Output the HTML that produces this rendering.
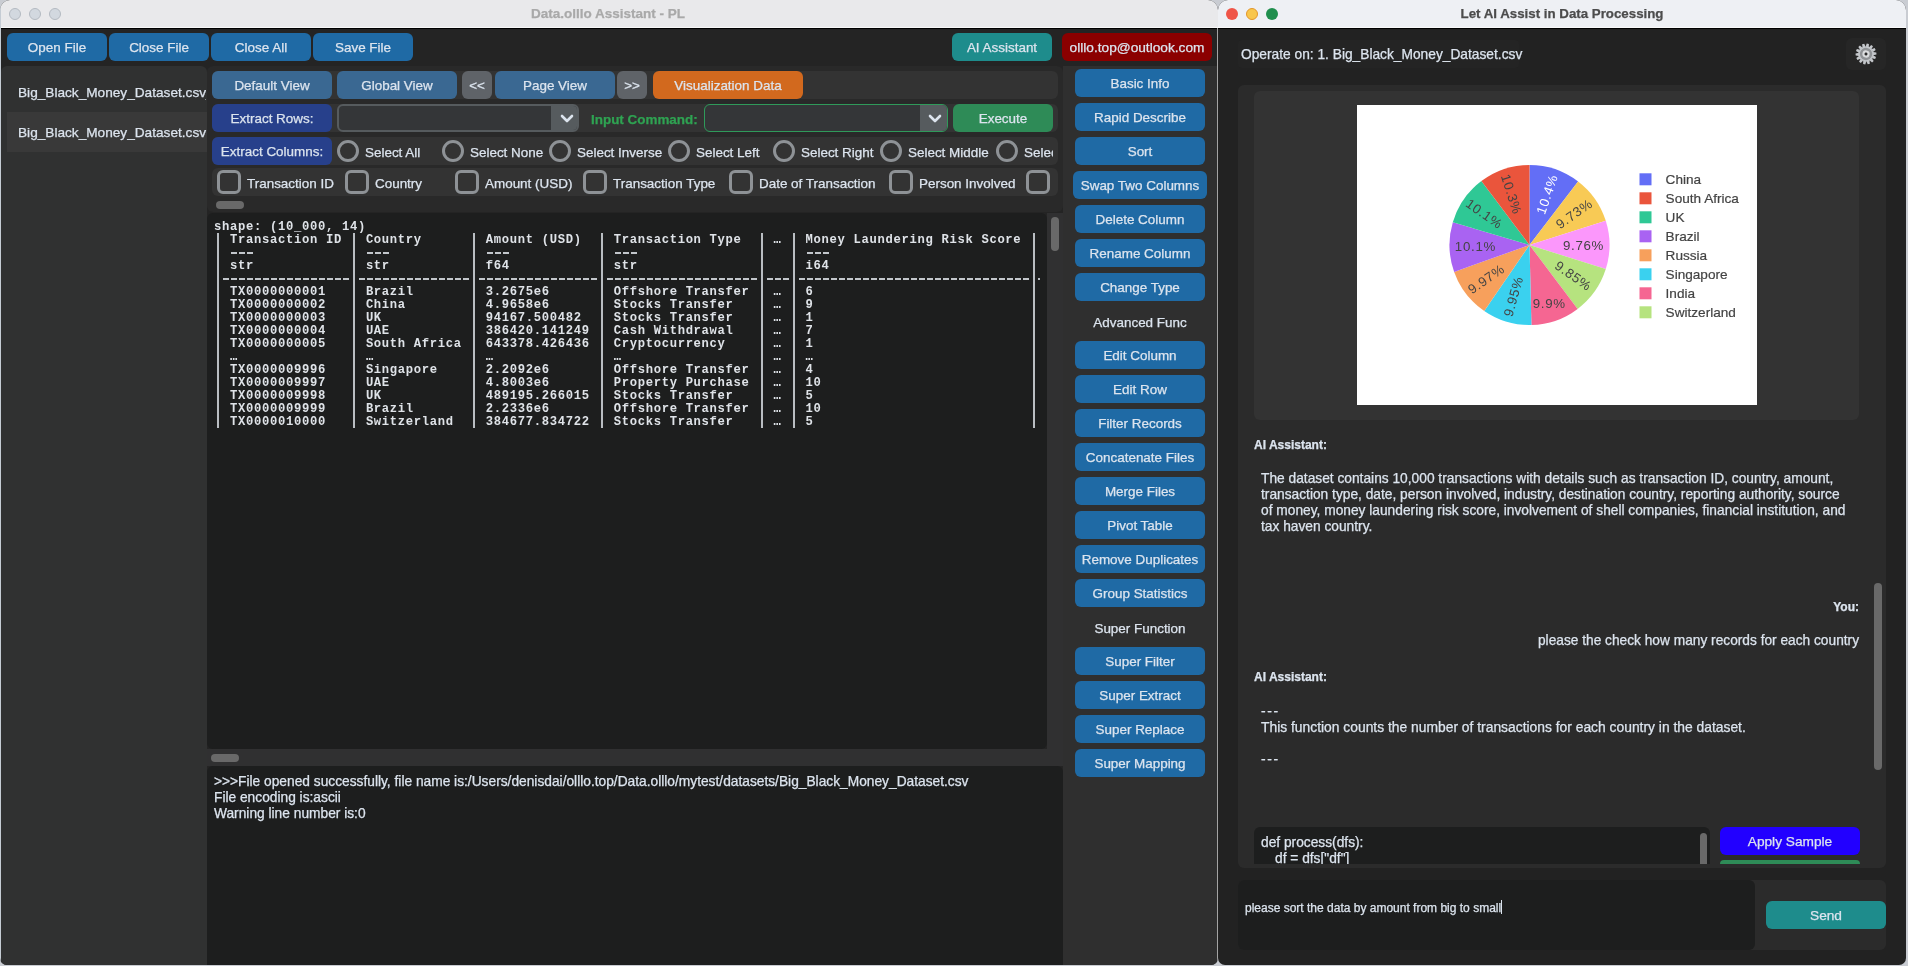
<!DOCTYPE html>
<html><head><meta charset="utf-8">
<style>
*{margin:0;padding:0;box-sizing:border-box}
html,body{width:1908px;height:966px;overflow:hidden;background:#c9ccd2;-webkit-font-smoothing:antialiased;font-family:"Liberation Sans",sans-serif;}
.a{position:absolute}
#lw,#rw{will-change:transform}
.btn{position:absolute;background:#1f6aa5;color:#dce4ee;-webkit-text-stroke:0.25px #dce4ee;border-radius:6px;font-size:13.45px;text-align:center;line-height:29px;height:28px;white-space:nowrap;overflow:hidden}
.t{position:absolute;color:#dce4ee;font-size:13.45px;-webkit-text-stroke:0.25px currentColor;white-space:nowrap;line-height:16px}
.band{position:absolute;background:#333333;border-radius:6px}
.radio{position:absolute;width:22px;height:22px;border:3px solid #8e9296;border-radius:50%}
.cb{position:absolute;width:24px;height:24px;border:3px solid #8e9296;border-radius:6px}
.mono{font-family:"Liberation Mono",monospace;font-size:12.2px;letter-spacing:0.68px;line-height:13px;color:#dfe3e8;white-space:pre;font-weight:bold}
.dash{height:2px;background:repeating-linear-gradient(90deg,transparent 0 1px,#c2c6cb 1px 7px,transparent 7px 8px)}
.combo{position:absolute;height:28px;background:#343638;border:2px solid #565b5e;border-radius:6px;overflow:hidden}
.combo .arr{position:absolute;right:-2px;top:-2px;width:28px;height:28px;background:#565b5e;border-radius:0 6px 6px 0}
</style></head><body>

<!-- ================= LEFT WINDOW ================= -->
<div class="a" id="lw" style="left:0;top:0;width:1218px;height:965px;background:#242424;border-radius:10px 10px 7px 7px;overflow:hidden">
  <!-- title bar -->
  <div class="a" style="left:0;top:0;width:1218px;height:29px;background:#e9e9eb;border-bottom:1px solid #000"></div><div class="a" style="left:0;top:27px;width:1218px;height:1px;background:#f8f8f8"></div><div class="a" style="left:0;top:0;width:1px;height:966px;background:#c5ccd4"></div>
  <div class="a" style="left:9px;top:8px;width:12px;height:12px;border-radius:50%;background:#d2d8df;border:1px solid #b3b9c1"></div>
  <div class="a" style="left:29px;top:8px;width:12px;height:12px;border-radius:50%;background:#d2d8df;border:1px solid #b3b9c1"></div>
  <div class="a" style="left:49px;top:8px;width:12px;height:12px;border-radius:50%;background:#d2d8df;border:1px solid #b3b9c1"></div>
  <div class="t" style="left:0;width:1216px;top:6px;text-align:center;color:#a9a9a9;font-weight:bold;font-size:13.5px">Data.olllo Assistant - PL</div>

  <!-- top buttons -->
  <div class="btn" style="left:7px;top:33px;width:100px">Open File</div>
  <div class="btn" style="left:109px;top:33px;width:100px">Close File</div>
  <div class="btn" style="left:211px;top:33px;width:100px">Close All</div>
  <div class="btn" style="left:313px;top:33px;width:100px">Save File</div>
  <div class="btn" style="left:952px;top:33px;width:100px;background:#1e8c8c">AI Assistant</div>
  <div class="btn" style="left:1062px;top:33px;width:150px;background:#8b0000;font-size:13.7px">olllo.top@outlook.com</div>

  <!-- file list panel -->
  <div class="a" style="left:1px;top:66px;width:206px;height:900px;background:#303131;border-radius:6px 6px 0 0"></div>
  <div class="a" style="left:7px;top:112px;width:200px;height:40px;background:#393939"></div>
  <div class="t" style="left:18px;top:85px;width:188px;overflow:hidden;font-size:13.65px">Big_Black_Money_Dataset.csv_</div>
  <div class="t" style="left:18px;top:125px;width:190px;overflow:hidden;font-size:13.65px">Big_Black_Money_Dataset.csv</div>

  <!-- middle top frame -->
  <div class="a" id="midtop" style="left:207px;top:66px;width:856px;height:146px;background:#292929;border-radius:6px"></div>


  <!-- middle top rows -->
  <div class="band" style="left:212px;top:71px;width:846px;height:28px"></div>
  <div class="band" style="left:212px;top:104px;width:846px;height:28px"></div>
  <div class="band" style="left:212px;top:137px;width:846px;height:28px"></div>
  <div class="band" style="left:212px;top:168px;width:846px;height:28px"></div>
  <div class="btn" style="left:212px;top:71px;width:120px;background:#3a6892">Default View</div>
  <div class="btn" style="left:337px;top:71px;width:120px;background:#3a6892">Global View</div>
  <div class="btn" style="left:462px;top:71px;width:30px;background:#5f6368">&lt;&lt;</div>
  <div class="btn" style="left:495px;top:71px;width:120px;background:#3a6892">Page View</div>
  <div class="btn" style="left:617px;top:71px;width:30px;background:#5f6368">&gt;&gt;</div>
  <div class="btn" style="left:653px;top:71px;width:150px;background:#d2691e">Visualization Data</div>

  <div class="btn" style="left:212px;top:104px;width:120px;background:#27408b">Extract Rows:</div>
  <div class="combo" style="left:337px;top:104px;width:242px"><div class="arr"></div></div>
  <svg class="a" style="left:560px;top:114px" width="14" height="10" viewBox="0 0 14 10"><path d="M2 2 L7 7 L12 2" stroke="#dce4ee" stroke-width="2.6" fill="none" stroke-linecap="round" stroke-linejoin="round"/></svg>
  <div class="t" style="left:591px;top:112px;color:#2fa352;font-weight:bold">Input Command:</div>
  <div class="combo" style="left:704px;top:104px;width:244px;border:1px solid #2f9a5a"><div class="arr" style="right:-1px;top:-1px"></div></div>
  <svg class="a" style="left:928px;top:114px" width="14" height="10" viewBox="0 0 14 10"><path d="M2 2 L7 7 L12 2" stroke="#dce4ee" stroke-width="2.6" fill="none" stroke-linecap="round" stroke-linejoin="round"/></svg>
  <div class="btn" style="left:953px;top:104px;width:100px;background:#2e8b57">Execute</div>

  <div class="btn" style="left:212px;top:137px;width:120px;background:#27408b">Extract Columns:</div>
  <div class="radio" style="left:337px;top:140px"></div>
  <div class="radio" style="left:442px;top:140px"></div>
  <div class="radio" style="left:549px;top:140px"></div>
  <div class="radio" style="left:668px;top:140px"></div>
  <div class="radio" style="left:773px;top:140px"></div>
  <div class="radio" style="left:880px;top:140px"></div>
  <div class="radio" style="left:996px;top:140px"></div>
  <div class="a" style="left:1024px;top:137px;width:29px;height:28px;overflow:hidden"><div class="t" style="left:0;top:8px">Select Last</div></div>
  <div class="t" style="left:365px;top:145px">Select All</div>
  <div class="t" style="left:470px;top:145px">Select None</div>
  <div class="t" style="left:577px;top:145px">Select Inverse</div>
  <div class="t" style="left:696px;top:145px">Select Left</div>
  <div class="t" style="left:801px;top:145px">Select Right</div>
  <div class="t" style="left:908px;top:145px">Select Middle</div>
  <div class="cb" style="left:217px;top:170px"></div>
  <div class="t" style="left:247px;top:176px">Transaction ID</div>
  <div class="cb" style="left:345px;top:170px"></div>
  <div class="t" style="left:375px;top:176px">Country</div>
  <div class="cb" style="left:455px;top:170px"></div>
  <div class="t" style="left:485px;top:176px">Amount (USD)</div>
  <div class="cb" style="left:583px;top:170px"></div>
  <div class="t" style="left:613px;top:176px">Transaction Type</div>
  <div class="cb" style="left:729px;top:170px"></div>
  <div class="t" style="left:759px;top:176px">Date of Transaction</div>
  <div class="cb" style="left:889px;top:170px"></div>
  <div class="t" style="left:919px;top:176px">Person Involved</div>
  <div class="cb" style="left:1026px;top:170px"></div>
  <div class="a" style="left:216px;top:201px;width:28px;height:8px;border-radius:4px;background:#696969"></div>

  <!-- right button panel -->
  <div class="a" id="rpanel" style="left:1063px;top:66px;width:154px;height:900px;background:#2f2f2f"></div>
  <div class="a" style="left:1217px;top:28px;width:1px;height:940px;background:#a3a3a3"></div>

  <div class="btn" style="left:1075px;top:69px;width:130px">Basic Info</div>
  <div class="btn" style="left:1075px;top:103px;width:130px">Rapid Describe</div>
  <div class="btn" style="left:1075px;top:137px;width:130px">Sort</div>
  <div class="btn" style="left:1073px;top:171px;width:134px">Swap Two Columns</div>
  <div class="btn" style="left:1075px;top:205px;width:130px">Delete Column</div>
  <div class="btn" style="left:1075px;top:239px;width:130px">Rename Column</div>
  <div class="btn" style="left:1075px;top:273px;width:130px">Change Type</div>
  <div class="btn" style="left:1075px;top:341px;width:130px">Edit Column</div>
  <div class="btn" style="left:1075px;top:375px;width:130px">Edit Row</div>
  <div class="btn" style="left:1075px;top:409px;width:130px">Filter Records</div>
  <div class="btn" style="left:1075px;top:443px;width:130px">Concatenate Files</div>
  <div class="btn" style="left:1075px;top:477px;width:130px">Merge Files</div>
  <div class="btn" style="left:1075px;top:511px;width:130px">Pivot Table</div>
  <div class="btn" style="left:1075px;top:545px;width:130px">Remove Duplicates</div>
  <div class="btn" style="left:1075px;top:579px;width:130px">Group Statistics</div>
  <div class="btn" style="left:1075px;top:647px;width:130px">Super Filter</div>
  <div class="btn" style="left:1075px;top:681px;width:130px">Super Extract</div>
  <div class="btn" style="left:1075px;top:715px;width:130px">Super Replace</div>
  <div class="btn" style="left:1075px;top:749px;width:130px">Super Mapping</div>
  <div class="t" style="left:1063px;width:154px;text-align:center;top:315px">Advanced Func</div>
  <div class="t" style="left:1063px;width:154px;text-align:center;top:621px">Super Function</div>

  <!-- table -->
  <div class="a" id="table" style="left:207px;top:213px;width:840px;height:536px;background:#1d1e1e;border-radius:6px"></div>
  <div class="a" style="left:1047px;top:213px;width:16px;height:553px;background:#303031"></div>
  <div class="a" style="left:207px;top:749px;width:856px;height:17px;background:#303031"></div>

  <!-- table content -->
  <pre class="a mono" style="left:214px;top:221px">shape: (10_000, 14)
  Transaction ID   Country        Amount (USD)    Transaction Type    …   Money Laundering Risk Score

  str              str            f64             str                     i64

  TX0000000001     Brazil         3.2675e6        Offshore Transfer   …   6
  TX0000000002     China          4.9658e6        Stocks Transfer     …   9
  TX0000000003     UK             94167.500482    Stocks Transfer     …   1
  TX0000000004     UAE            386420.141249   Cash Withdrawal     …   7
  TX0000000005     South Africa   643378.426436   Cryptocurrency      …   1
  …                …              …               …                   …   …
  TX0000009996     Singapore      2.2092e6        Offshore Transfer   …   4
  TX0000009997     UAE            4.8003e6        Property Purchase   …   10
  TX0000009998     UK             489195.266015   Stocks Transfer     …   5
  TX0000009999     Brazil         2.2336e6        Offshore Transfer   …   10
  TX0000010000     Switzerland    384677.834722   Stocks Transfer     …   5</pre>
  <div class="a" style="left:217px;top:233px;width:2px;height:195px;background:#b9bdc2"></div>
  <div class="a" style="left:353px;top:233px;width:2px;height:195px;background:#b9bdc2"></div>
  <div class="a" style="left:473px;top:233px;width:2px;height:195px;background:#b9bdc2"></div>
  <div class="a" style="left:601px;top:233px;width:2px;height:195px;background:#b9bdc2"></div>
  <div class="a" style="left:761px;top:233px;width:2px;height:195px;background:#b9bdc2"></div>
  <div class="a" style="left:793px;top:233px;width:2px;height:195px;background:#b9bdc2"></div>
  <div class="a" style="left:1033px;top:233px;width:2px;height:195px;background:#b9bdc2"></div>
  <div class="a dash" style="left:222px;top:278px;width:128px"></div>
  <div class="a dash" style="left:358px;top:278px;width:112px"></div>
  <div class="a dash" style="left:478px;top:278px;width:120px"></div>
  <div class="a dash" style="left:606px;top:278px;width:152px"></div>
  <div class="a dash" style="left:766px;top:278px;width:24px"></div>
  <div class="a dash" style="left:798px;top:278px;width:232px"></div>
  <div class="a dash" style="left:230px;top:252px;width:24px"></div>
  <div class="a dash" style="left:366px;top:252px;width:24px"></div>
  <div class="a dash" style="left:486px;top:252px;width:24px"></div>
  <div class="a dash" style="left:614px;top:252px;width:24px"></div>
  <div class="a dash" style="left:806px;top:252px;width:24px"></div>
  <div class="a" style="left:1038px;top:278px;width:2px;height:2px;background:#b9bdc2"></div>
  <!-- log -->
  <div class="a" id="log" style="left:207px;top:766px;width:856px;height:200px;background:#1d1e1e;border-radius:6px 6px 0 0"></div>
  <div class="t" style="left:214px;top:774px;line-height:16px;font-size:13.75px">&gt;&gt;&gt;File opened successfully, file name is:/Users/denisdai/olllo.top/Data.olllo/mytest/datasets/Big_Black_Money_Dataset.csv<br>File encoding is:ascii<br>Warning line number is:0</div>
  <div class="a" style="left:1051px;top:217px;width:8px;height:34px;border-radius:4px;background:#696969"></div>
  <div class="a" style="left:211px;top:754px;width:28px;height:8px;border-radius:4px;background:#696969"></div>
</div>

<!-- ================= RIGHT WINDOW ================= -->
<div class="a" id="rw" style="left:1218px;top:0;width:688px;height:965px;background:#222222;border-radius:10px 10px 7px 7px;overflow:hidden">
  <div class="a" style="left:0;top:0;width:688px;height:29px;background:#eef0f4;border-bottom:1px solid #000"></div><div class="a" style="left:0;top:27px;width:688px;height:1px;background:#fafafa"></div>
  <div class="a" style="left:8px;top:8px;width:12px;height:12px;border-radius:50%;background:#ef5548"></div>
  <div class="a" style="left:28px;top:8px;width:12px;height:12px;border-radius:50%;background:#f8c64c;border:1px solid #e3962a"></div>
  <div class="a" style="left:48px;top:8px;width:12px;height:12px;border-radius:50%;background:#1f8e4d"></div>
  <div class="t" style="left:0;width:688px;top:6px;text-align:center;color:#4c4c4c;font-weight:bold;font-size:13.3px">Let AI Assist in Data Processing</div>

  <!-- operate on -->
  <div class="a" style="left:20px;top:40px;width:281px;height:28px;background:#242424;border-radius:4px"></div>
  <div class="t" style="left:23px;top:47px;font-size:13.75px">Operate on: 1. Big_Black_Money_Dataset.csv</div>
  <div class="a" style="left:628px;top:38px;width:40px;height:32px;background:#262626;border-radius:6px"></div>
  <svg class="a" style="left:636.5px;top:43.3px" width="22" height="22" viewBox="-11 -11 22 22"><g transform="rotate(10)"><path d="M-1.6,-7 L-1.1,-10.4 L1.1,-10.4 L1.6,-7 Z" fill="#c4c7cb" transform="rotate(0.00)"/><path d="M-1.6,-7 L-1.1,-10.4 L1.1,-10.4 L1.6,-7 Z" fill="#c4c7cb" transform="rotate(25.71)"/><path d="M-1.6,-7 L-1.1,-10.4 L1.1,-10.4 L1.6,-7 Z" fill="#c4c7cb" transform="rotate(51.43)"/><path d="M-1.6,-7 L-1.1,-10.4 L1.1,-10.4 L1.6,-7 Z" fill="#c4c7cb" transform="rotate(77.14)"/><path d="M-1.6,-7 L-1.1,-10.4 L1.1,-10.4 L1.6,-7 Z" fill="#c4c7cb" transform="rotate(102.86)"/><path d="M-1.6,-7 L-1.1,-10.4 L1.1,-10.4 L1.6,-7 Z" fill="#c4c7cb" transform="rotate(128.57)"/><path d="M-1.6,-7 L-1.1,-10.4 L1.1,-10.4 L1.6,-7 Z" fill="#c4c7cb" transform="rotate(154.29)"/><path d="M-1.6,-7 L-1.1,-10.4 L1.1,-10.4 L1.6,-7 Z" fill="#c4c7cb" transform="rotate(180.00)"/><path d="M-1.6,-7 L-1.1,-10.4 L1.1,-10.4 L1.6,-7 Z" fill="#c4c7cb" transform="rotate(205.71)"/><path d="M-1.6,-7 L-1.1,-10.4 L1.1,-10.4 L1.6,-7 Z" fill="#c4c7cb" transform="rotate(231.43)"/><path d="M-1.6,-7 L-1.1,-10.4 L1.1,-10.4 L1.6,-7 Z" fill="#c4c7cb" transform="rotate(257.14)"/><path d="M-1.6,-7 L-1.1,-10.4 L1.1,-10.4 L1.6,-7 Z" fill="#c4c7cb" transform="rotate(282.86)"/><path d="M-1.6,-7 L-1.1,-10.4 L1.1,-10.4 L1.6,-7 Z" fill="#c4c7cb" transform="rotate(308.57)"/><path d="M-1.6,-7 L-1.1,-10.4 L1.1,-10.4 L1.6,-7 Z" fill="#c4c7cb" transform="rotate(334.29)"/><circle r="7.6" fill="#c4c7cb"/><circle r="6.2" fill="#909396"/><circle r="3.6" fill="#dadcde"/><circle r="1.5" fill="#2a2a2a"/></g></svg>
  <!-- chat frame -->
  <div class="a" style="left:20px;top:85px;width:648px;height:783px;background:#2b2b2b;border-radius:6px"></div>
  <div class="a" style="left:36px;top:91px;width:605px;height:329px;background:#333333;border-radius:6px"></div>
  <svg class="a" style="left:139px;top:105px" width="400" height="300" viewBox="0 0 400 300" font-family="Liberation Sans"><rect width="400" height="300" fill="#fff"/><path d="M172.5,140 L172.50,60.00 A80,80 0 0 1 221.09,76.45 Z" fill="#636ef6" /><path d="M172.5,140 L221.09,76.45 A80,80 0 0 1 248.75,115.81 Z" fill="#f8ca55" /><path d="M172.5,140 L248.75,115.81 A80,80 0 0 1 248.78,164.10 Z" fill="#fb97fb" /><path d="M172.5,140 L248.78,164.10 A80,80 0 0 1 220.65,203.88 Z" fill="#b6e37f" /><path d="M172.5,140 L220.65,203.88 A80,80 0 0 1 174.41,219.98 Z" fill="#f56692" /><path d="M172.5,140 L174.41,219.98 A80,80 0 0 1 127.24,205.97 Z" fill="#3ad1ef" /><path d="M172.5,140 L127.24,205.97 A80,80 0 0 1 97.16,166.91 Z" fill="#f7a05c" /><path d="M172.5,140 L97.16,166.91 A80,80 0 0 1 95.82,117.20 Z" fill="#a963f2" /><path d="M172.5,140 L95.82,117.20 A80,80 0 0 1 124.39,76.09 Z" fill="#2fc895" /><path d="M172.5,140 L124.39,76.09 A80,80 0 0 1 172.50,60.00 Z" fill="#ea553c" /><text x="190.2" y="89.3" transform="rotate(-71 190.2 89.3)" fill="#fff" font-size="13.3" letter-spacing="0.7" text-anchor="middle" dominant-baseline="central">10.4%</text><text x="217.3" y="108.9" transform="rotate(-35 217.3 108.9)" fill="#444" font-size="13.3" letter-spacing="0.7" text-anchor="middle" dominant-baseline="central">9.73%</text><text x="226.5" y="140.4" transform="rotate(0 226.5 140.4)" fill="#444" font-size="13.3" letter-spacing="0.7" text-anchor="middle" dominant-baseline="central">9.76%</text><text x="216.3" y="170.9" transform="rotate(35 216.3 170.9)" fill="#444" font-size="13.3" letter-spacing="0.7" text-anchor="middle" dominant-baseline="central">9.85%</text><text x="192.3" y="198.0" transform="rotate(0 192.3 198.0)" fill="#444" font-size="13.3" letter-spacing="0.7" text-anchor="middle" dominant-baseline="central">9.9%</text><text x="156.5" y="191.5" transform="rotate(-74 156.5 191.5)" fill="#444" font-size="13.3" letter-spacing="0.7" text-anchor="middle" dominant-baseline="central">9.95%</text><text x="129.3" y="174.1" transform="rotate(-35 129.3 174.1)" fill="#444" font-size="13.3" letter-spacing="0.7" text-anchor="middle" dominant-baseline="central">9.97%</text><text x="118.4" y="141.5" transform="rotate(0 118.4 141.5)" fill="#444" font-size="13.3" letter-spacing="0.7" text-anchor="middle" dominant-baseline="central">10.1%</text><text x="127.1" y="108.9" transform="rotate(35 127.1 108.9)" fill="#444" font-size="13.3" letter-spacing="0.7" text-anchor="middle" dominant-baseline="central">10.1%</text><text x="154.3" y="89.3" transform="rotate(72 154.3 89.3)" fill="#444" font-size="13.3" letter-spacing="0.7" text-anchor="middle" dominant-baseline="central">10.3%</text><rect x="282.5" y="68.3" width="12" height="12" fill="#636ef6"/><text x="308.6" y="74.3" fill="#444" font-size="13.6" stroke="#444" stroke-width="0.2" dominant-baseline="central">China</text><rect x="282.5" y="87.3" width="12" height="12" fill="#ea553c"/><text x="308.6" y="93.3" fill="#444" font-size="13.6" stroke="#444" stroke-width="0.2" dominant-baseline="central">South Africa</text><rect x="282.5" y="106.3" width="12" height="12" fill="#2fc895"/><text x="308.6" y="112.3" fill="#444" font-size="13.6" stroke="#444" stroke-width="0.2" dominant-baseline="central">UK</text><rect x="282.5" y="125.3" width="12" height="12" fill="#a963f2"/><text x="308.6" y="131.3" fill="#444" font-size="13.6" stroke="#444" stroke-width="0.2" dominant-baseline="central">Brazil</text><rect x="282.5" y="144.3" width="12" height="12" fill="#f7a05c"/><text x="308.6" y="150.3" fill="#444" font-size="13.6" stroke="#444" stroke-width="0.2" dominant-baseline="central">Russia</text><rect x="282.5" y="163.3" width="12" height="12" fill="#3ad1ef"/><text x="308.6" y="169.3" fill="#444" font-size="13.6" stroke="#444" stroke-width="0.2" dominant-baseline="central">Singapore</text><rect x="282.5" y="182.3" width="12" height="12" fill="#f56692"/><text x="308.6" y="188.3" fill="#444" font-size="13.6" stroke="#444" stroke-width="0.2" dominant-baseline="central">India</text><rect x="282.5" y="201.3" width="12" height="12" fill="#b6e37f"/><text x="308.6" y="207.3" fill="#444" font-size="13.6" stroke="#444" stroke-width="0.2" dominant-baseline="central">Switzerland</text></svg>
  <div class="t" style="left:36px;top:437px;font-size:12px;font-weight:bold">AI Assistant:</div>
  <div class="t" style="left:43px;top:471px;font-size:13.75px;line-height:16px">The dataset contains 10,000 transactions with details such as transaction ID, country, amount,<br>transaction type, date, person involved, industry, destination country, reporting authority, source<br>of money, money laundering risk score, involvement of shell companies, financial institution, and<br>tax haven country.</div>
  <div class="t" style="left:300px;width:341px;text-align:right;top:599px;font-size:12px;font-weight:bold">You:</div>
  <div class="t" style="left:200px;width:441px;text-align:right;top:633px;font-size:13.72px">please the check how many records for each country</div>
  <div class="t" style="left:36px;top:669px;font-size:12px;font-weight:bold">AI Assistant:</div>
  <div class="t" style="left:43px;top:703px;font-size:13.85px;line-height:16px"><span style="letter-spacing:1.6px">---</span><br>This function counts the number of transactions for each country in the dataset.<br><br><span style="letter-spacing:1.6px">---</span></div>
  <div class="a" style="left:656px;top:583px;width:8px;height:187px;border-radius:4px;background:#696969"></div>
  <!-- code box -->
  <div class="a" style="left:36px;top:827px;width:456px;height:37px;background:#1d1e1e;border-radius:6px 6px 0 0;overflow:hidden">
    <div class="t" style="left:7px;top:8px;font-size:13.75px;line-height:16px">def process(dfs):<br><span style="padding-left:14px">df = dfs["df"]</span></div>
    <div class="a" style="left:446px;top:6px;width:7px;height:40px;border-radius:4px;background:#696969"></div>
  </div>
  <div class="btn" style="left:502px;top:827px;width:140px;background:#2200ff;font-size:13.7px">Apply Sample</div>
  <div class="a" style="left:502px;top:860px;width:140px;height:4px;background:#2e8b57;border-radius:6px 6px 0 0"></div>
  <!-- input -->
  <div class="a" style="left:20px;top:880px;width:648px;height:70px;background:#2b2b2b;border-radius:6px"></div>
  <div class="a" style="left:20px;top:880px;width:517px;height:70px;background:#1d1e1e;border-radius:6px"></div>
  <div class="t" style="left:27px;top:900px;font-size:12px">please sort the data by amount from big to small<span style="display:inline-block;width:1px;height:14px;background:#dce4ee;vertical-align:-2px"></span></div>
  <div class="btn" style="left:548px;top:901px;width:120px;background:#1e8c8c;font-size:13.7px">Send</div>
</div>

</body></html>
